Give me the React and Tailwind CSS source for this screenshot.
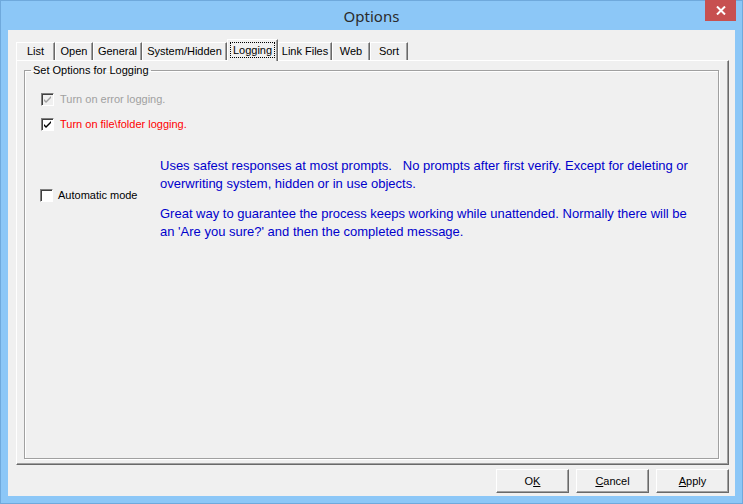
import React from "react";

const ui = { fontFamily: '"Liberation Sans", Arial, sans-serif' };

const Check = ({ checked, disabled }) => (
    <span
        className={`w-[13px] h-[13px] shrink-0 flex items-center justify-center border border-t-[#808080] border-l-[#808080] border-b-white border-r-white shadow-[inset_1px_1px_0_#404040] ${disabled ? "bg-[#f0f0f0]" : "bg-white"}`}
    >
        {checked && (
            <svg width="9" height="9" viewBox="0 0 9 9">
                <path d="M1 4 L3 6 L8 1 L8 3 L3 8 L1 6 Z" fill={disabled ? "#a0a0a0" : "#000"} />
            </svg>
        )}
    </span>
);

const Tab = ({ label, width, selected }) => {
    if (selected) {
        return (
            <div
                className="h-[22px] -mb-[1px] relative z-10 bg-[#f0f0f0] border-t border-l border-white border-r border-r-[#696969] shadow-[inset_-1px_0_0_#a0a0a0] flex items-start justify-center pt-[2px]"
                style={{ width }}
            >
                <span className="px-[2px] leading-[14px] border border-dotted border-black">{label}</span>
            </div>
        );
    }
    return (
        <div
            className="h-[18px] bg-[#f0f0f0] border-t border-l border-white border-r border-r-[#696969] shadow-[inset_-1px_0_0_#a0a0a0] flex items-center justify-center"
            style={{ width }}
        >
            {label}
        </div>
    );
};

const Btn = ({ children }) => (
    <button className="w-[73px] h-[24px] bg-[#f0f0f0] border border-t-white border-l-white border-r-[#696969] border-b-[#696969] shadow-[inset_-1px_-1px_0_#a0a0a0] text-[11px] text-black flex items-center justify-center">
        {children}
    </button>
);

export default function App() {
    return (
        <div className="w-[743px] h-[504px] bg-[#8cc7f7] border border-[#6fa9dc] flex flex-col" style={ui}>
            {/* title bar */}
            <div className="h-[29px] relative flex items-center justify-center">
                <span className="text-[15px] text-[#2b2b2b] pt-[1px]" style={{ fontFamily: '"Noto Sans", "Open Sans", sans-serif' }}>
                    Options
                </span>
                <div className="absolute -top-[1px] right-[6px] w-[31px] h-[21px] bg-[#c75050] flex items-center justify-center">
                    <svg width="10" height="9" viewBox="0 0 10 9">
                        <path d="M1 0.5 L9 8.5 M9 0.5 L1 8.5" stroke="#fff" strokeWidth="2" />
                    </svg>
                </div>
            </div>

            {/* client */}
            <div className="mx-[7px] h-[466px] bg-[#f0f0f0] flex flex-col text-[11px]">
                {/* tabs */}
                <div className="h-[20px] mt-[10px] ml-[8px] flex items-end">
                    <Tab label="List" width={39} />
                    <Tab label="Open" width={38} />
                    <Tab label="General" width={49} />
                    <Tab label="System/Hidden" width={85} />
                    <Tab label="Logging" width={51} selected />
                    <Tab label="Link Files" width={54} />
                    <Tab label="Web" width={38} />
                    <Tab label="Sort" width={38} />
                </div>

                {/* panel */}
                <div className="ml-[8px] w-[713px] h-[405px] border border-t-white border-l-white border-r-[#696969] border-b-[#696969] shadow-[inset_-1px_-1px_0_#a0a0a0] pl-[7px] pt-[3px]">
                    <fieldset className="w-[695px] h-[395px] border border-[#a0a0a0] shadow-[inset_1px_1px_0_#fff,1px_1px_0_#fff]">
                        <legend className="ml-[6px] px-[2px] leading-[13px] text-black">Set Options for Logging</legend>

                        <div className="pl-[16px] pt-[16px] flex flex-col">
                            <div className="flex items-center gap-[6px] h-[13px]">
                                <Check checked disabled />
                                <span className="text-[#a0a0a0]">Turn on error logging.</span>
                            </div>
                            <div className="flex items-center gap-[6px] h-[13px] mt-[12px]">
                                <Check checked />
                                <span className="text-[#ff0000]">Turn on file\folder logging.</span>
                            </div>

                            <div className="flex mt-[26px]">
                                <div className="w-[119px] pt-[32px]">
                                    <div className="flex items-center gap-[5px] h-[13px] -ml-[1px]">
                                        <Check />
                                        <span className="text-black">Automatic mode</span>
                                    </div>
                                </div>
                                <div className="text-[13px] leading-[18px] text-[#0000cc] whitespace-pre">
                                    <div>Uses safest responses at most prompts.   No prompts after first verify. Except for deleting or</div>
                                    <div>overwriting system, hidden or in use objects.</div>
                                    <div className="mt-[12px]">Great way to guarantee the process keeps working while unattended. Normally there will be</div>
                                    <div>an 'Are you sure?' and then the completed message.</div>
                                </div>
                            </div>
                        </div>
                    </fieldset>
                </div>

                {/* buttons */}
                <div className="mt-[4px] flex justify-end gap-[7px] pr-[6px]">
                    <Btn>O<u>K</u></Btn>
                    <Btn><u>C</u>ancel</Btn>
                    <Btn><u>A</u>pply</Btn>
                </div>
            </div>
        </div>
    );
}
